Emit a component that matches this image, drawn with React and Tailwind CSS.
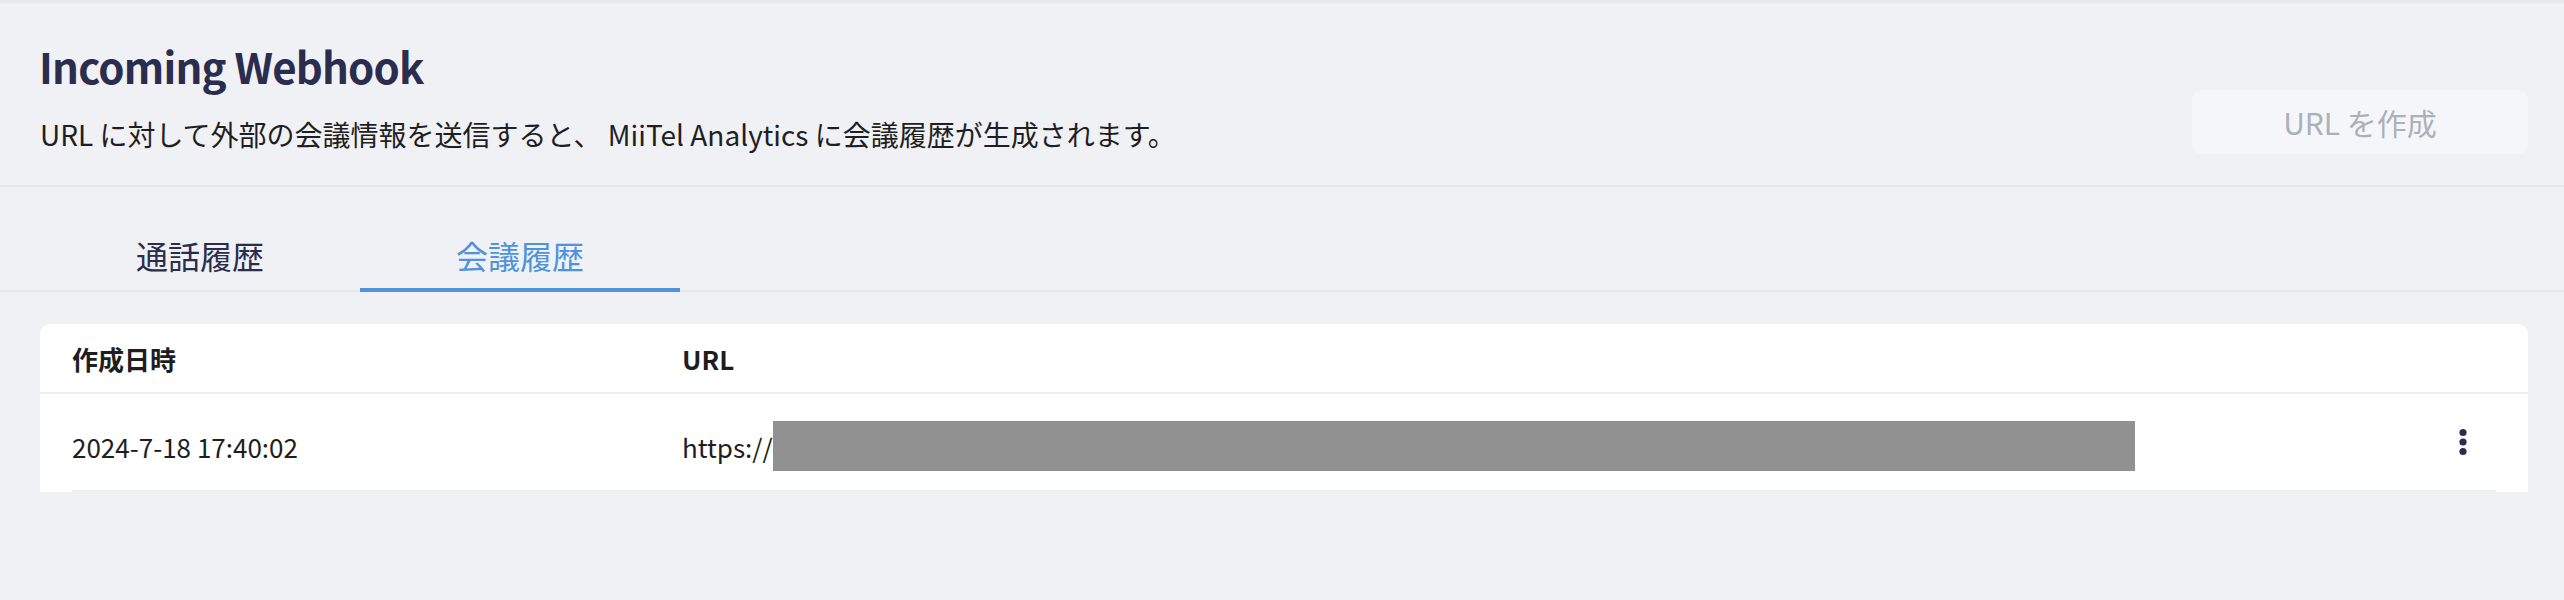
import { useState } from 'react';

const tabs = ['通話履歴', '会議履歴'];

function DotsIcon() {
    return (
        <svg width="12" height="30" viewBox="0 0 12 30" className="text-[#2b2d4f]">
            <circle cx="6" cy="5.5" r="3.6" fill="currentColor" />
            <circle cx="6" cy="15" r="3.6" fill="currentColor" />
            <circle cx="6" cy="24.5" r="3.6" fill="currentColor" />
        </svg>
    );
}

export default function App() {
    const [activeTab, setActiveTab] = useState(1);

    return (
        <div
            className="min-h-[600px] w-full bg-[#f0f1f5] border-t-[3px] border-[#e7e8ec]"
            style={{ fontFamily: '"Noto Sans CJK JP", "Noto Sans", sans-serif' }}
        >
            {/* Header */}
            <div className="flex items-start justify-between h-[184px] pl-[40px] pr-[36px] pt-[39px] border-b-2 border-[#e6e7eb]">
                <div className="flex flex-col">
                    <h1 className="text-[42px] leading-[48px] font-bold tracking-[-0.8px] text-[#2b2d4e] -ml-[1px]">
                        Incoming Webhook
                    </h1>
                    <p className="mt-[24px] text-[28px] leading-[40px] text-[#1f1f23]">
                        URL に対して外部の会議情報を送信すると、 MiiTel Analytics に会議履歴が生成されます。
                    </p>
                </div>
                <button className="mt-[48px] w-[336px] h-[64px] rounded-[10px] bg-[#f5f6fa] text-[30px] text-[#abb0b9] flex items-center justify-center">
                    URL を作成
                </button>
            </div>

            {/* Tabs */}
            <div className="flex pl-[40px] pt-[33px] border-b-2 border-[#e6e7eb]">
                {tabs.map((tab, i) => (
                    <button
                        key={tab}
                        onClick={() => setActiveTab(i)}
                        className={`relative w-[320px] h-[70px] flex items-center justify-center text-[32px] ${
                            activeTab === i ? 'text-[#4f93dc]' : 'text-[#2b2d4e]'
                        }`}
                    >
                        {tab}
                        {activeTab === i && (
                            <span className="absolute left-0 right-0 -bottom-[2px] h-[4px] bg-[#4f93dc]" />
                        )}
                    </button>
                ))}
            </div>

            {/* Table */}
            <div className="mr-[36px] ml-[40px] mt-[32px] bg-white rounded-t-[10px]">
                <div className="grid grid-cols-[610px_1fr_auto] items-center h-[70px] px-[32px] border-b-2 border-[#eeeff2] text-[26px] font-bold text-[#1e1e1e]">
                    <span>作成日時</span>
                    <span>URL</span>
                    <span />
                </div>
                <div className="px-[32px]">
                    <div className="grid grid-cols-[610px_1fr_auto] items-center h-[98px] pt-[8px] border-b-2 border-[#eeeff3] text-[26px] text-[#1e1e1e]">
                        <span>2024-7-18 17:40:02</span>
                        <div className="flex items-center">
                            <span>https://</span>
                            <span className="inline-block w-[1362px] h-[50px] bg-[#919191]" />
                        </div>
                        <button className="mr-[27px] -mt-[8px] flex items-center">
                            <DotsIcon />
                        </button>
                    </div>
                </div>
            </div>
        </div>
    );
}
